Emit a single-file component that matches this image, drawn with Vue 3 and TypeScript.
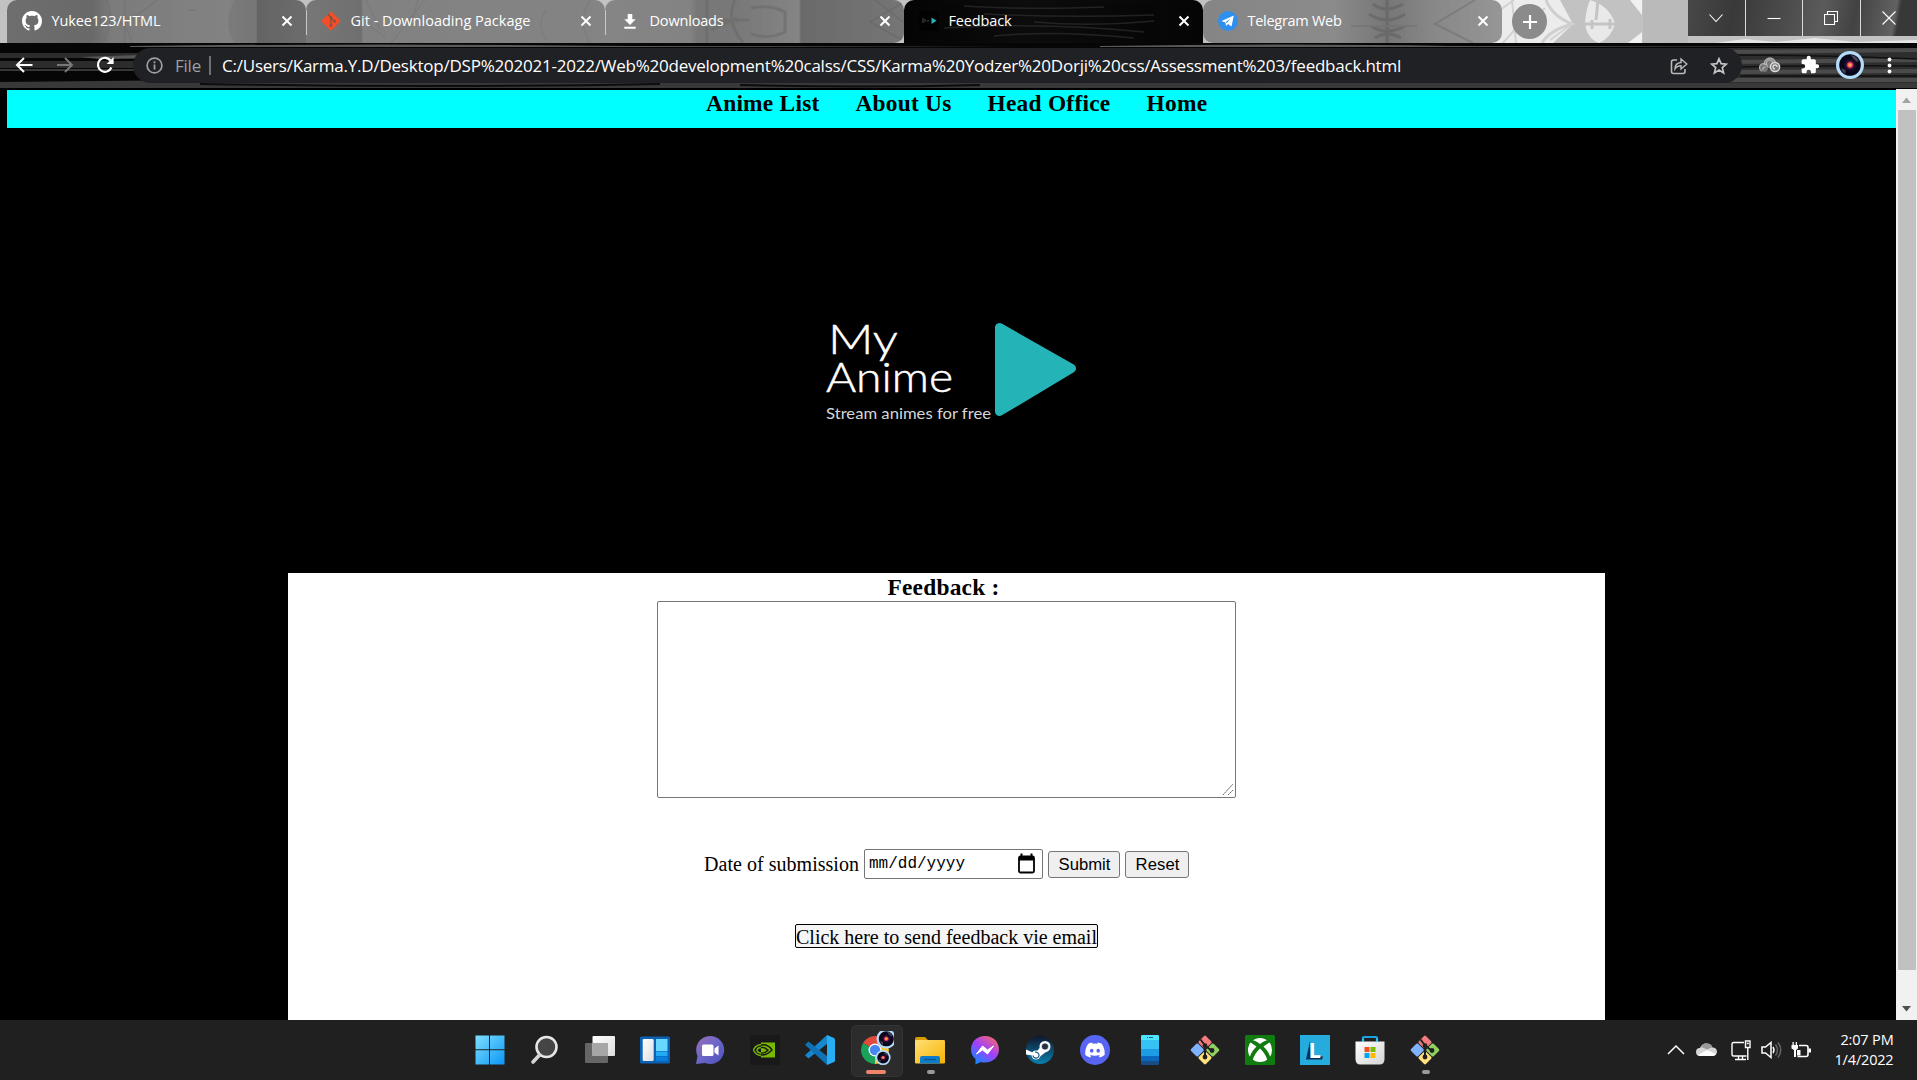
<script setup lang="ts">
interface Tab {
  id: string
  title: string
  width: number
}

const tabs: Tab[] = [
  { id: 'github', title: 'Yukee123/HTML', width: 109 },
  { id: 'git', title: 'Git - Downloading Package', width: 180 },
  { id: 'download', title: 'Downloads', width: 74 },
  { id: 'anime', title: 'Feedback', width: 63 },
  { id: 'telegram', title: 'Telegram Web', width: 94 },
]

const apps: string[] = [
  'windows', 'search', 'taskview', 'widgets', 'chat', 'nvidia', 'vscode', 'chrome', 'explorer',
  'messenger', 'steam', 'discord', 'phone', 'git', 'xbox', 'lenovo', 'store', 'gitrun',
]

const url =
  'C:/Users/Karma.Y.D/Desktop/DSP%202021-2022/Web%20development%20calss/CSS/Karma%20Yodzer%20Dorji%20css/Assessment%203/feedback.html'

// Spreads a label's characters so that it takes up the given width.
const vFit = {
  mounted(el: HTMLElement, binding: { value: number }) {
    const natural = el.getBoundingClientRect().width
    const count = (el.textContent ?? '').length
    if (count > 0) el.style.letterSpacing = `${(binding.value - natural) / count}px`
  },
}
</script>

<template>
  <div class="screen">
    <svg width="0" height="0" class="defs">
      <defs>
        <linearGradient id="win" x1="0" y1="0" x2="1" y2="1"><stop offset="0" stop-color="#7fe0ff" /><stop offset="1" stop-color="#0a95f5" /></linearGradient>
        <linearGradient id="pane" x1="0" y1="0" x2="1" y2="1"><stop offset="0" stop-color="#fff" /><stop offset="1" stop-color="#ddd" /></linearGradient>
        <linearGradient id="chatg" x1="0" y1="0" x2="1" y2="1"><stop offset="0" stop-color="#9a6fb8" /><stop offset=".5" stop-color="#6a66c8" /><stop offset="1" stop-color="#4b50bd" /></linearGradient>
        <linearGradient id="fold" x1="0" y1="0" x2="1" y2="1"><stop offset="0" stop-color="#ffdf76" /><stop offset="1" stop-color="#f6b400" /></linearGradient>
        <linearGradient id="msg" x1=".2" y1="1" x2=".9" y2="0"><stop offset="0" stop-color="#0a8cff" /><stop offset=".5" stop-color="#a040ff" /><stop offset="1" stop-color="#ff6b60" /></linearGradient>
        <linearGradient id="stm" x1="0" y1="0" x2="0" y2="1"><stop offset="0" stop-color="#10172f" /><stop offset="1" stop-color="#0b7fae" /></linearGradient>
        <linearGradient id="str" x1="0" y1="0" x2="1" y2="1"><stop offset="0" stop-color="#fff" /><stop offset="1" stop-color="#d4d4d4" /></linearGradient>
        <radialGradient id="vinyl"><stop offset="0" stop-color="#ffd84a" /><stop offset=".2" stop-color="#ff8a3a" /><stop offset=".38" stop-color="#d8306a" /><stop offset=".55" stop-color="#2a0f34" /><stop offset="1" stop-color="#05061a" /></radialGradient>
        <g id="avatar">
          <circle cx="14" cy="14" r="14" fill="#b5dbfa" />
          <circle cx="14" cy="14" r="10.8" fill="#070719" />
          <path d="M15 4a10 10 0 0 1 8 6l-4 1zM5 17l5 2-1 4a10 10 0 0 1-4-6" fill="#9aa2b4" opacity=".4" />
          <circle cx="14" cy="14" r="7" fill="url(#vinyl)" />
        </g>
        <g id="gitbash">
          <g transform="rotate(45 15 15)">
            <rect x="4.500" y="4.500" width="10" height="10" rx="1.300" fill="#f47b7d" />
            <rect x="15.500" y="4.500" width="10" height="10" rx="1.300" fill="#8fd05f" />
            <rect x="4.500" y="15.500" width="10" height="10" rx="1.300" fill="#80b3ff" />
            <rect x="15.500" y="15.500" width="10" height="10" rx="1.300" fill="#ffe07a" />
          </g>
          <path d="M10.500 4.500l4.500 6v12M15 10.500l6.500 5" fill="none" stroke="#202020" stroke-width="2" />
          <circle cx="15" cy="10.700" r="2.400" fill="#202020" /><circle cx="15" cy="22" r="2.400" fill="#202020" /><circle cx="22" cy="15.500" r="2.400" fill="#202020" />
        </g>
      </defs>
    </svg>

    <header class="tabstrip">
      <svg class="wall" width="1917" height="43" viewBox="0 0 1917 43" preserveAspectRatio="none">
        <rect width="1917" height="43" fill="#c2c2c2" />
        <path d="M1490 0h70l13 24-20 19h-63z" fill="#ececec" />
        <path d="M1503 43l14-16M1500 10l14-10M1545 8l-22 22M1550 40l22-16M1512 0l4 43" fill="none" stroke="#d2d2d2" stroke-width="2" />
        <path d="M1546 0q6 16 26 24-22 6-30 19" fill="none" stroke="#cfcfcf" stroke-width="3" />
        <path d="M1590 0q20 6 25 24-4 14-16 19-12-4-14-20 1-14 5-23z" fill="#e9e9e9" />
        <path d="M1585 24h30M1592 20v9M1610 19v10M1598 0l-2 20" fill="none" stroke="#c4c4c4" stroke-width="3" />
        <path d="M1630 0h12v15zM1642 32v11h-14z" fill="#f1f1f1" />
        <path d="M1643 0h45v43h-45z" fill="#bababa" />
        <path d="M1715 43l30-4 30 3 40-4 40 4 62-2v3z" fill="#e6e6e6" />
      </svg>
      <div v-for="tab in tabs" :key="tab.id" class="tab" :class="'tab-' + tab.id">
        <svg v-if="tab.id === 'github'" class="tex" viewBox="0 0 299 43"><path d="M96 43q12-22 4-43M118 43V0M110 25q20-8 40-25M125 43q-5-20-25-30M180 10h10" fill="none" stroke="#6d6d6d" stroke-width="1.200" /><path d="M228 0q-14 22 0 43h22V0z" fill="#757575" /></svg>
        <svg v-else-if="tab.id === 'git'" class="tex" viewBox="0 0 299 43"><path d="M60 0l14 30M85 43l34-43M56 20l24 18M112 0l-6 20M240 10q-10 14 0 30M284 0q-14 22 0 43" fill="none" stroke="#757575" stroke-width="1.200" /></svg>
        <svg v-else-if="tab.id === 'download'" class="tex" viewBox="0 0 299 43"><path d="M102 0v43M130 0q-10 20 8 43M118 20h26M146 8q18-4 34 4v20q-16 8-34 2M106 30l26-12" fill="none" stroke="#696969" stroke-width="3" /><path d="M299 2l-34 20 34 19M270 0l28 22" fill="none" stroke="#646464" stroke-width="1.500" /></svg>
        <svg v-else-if="tab.id === 'anime'" class="tex" viewBox="0 0 299 43"><path d="M60 6q60 4 140 1M80 14q80 4 170 1M40 28q100-6 200 4M90 36q60-6 140 2M130 22q60 5 120-1" fill="none" stroke="#383838" stroke-width="1.500" /></svg>
        <svg v-else class="tex" viewBox="0 0 299 43"><path d="M184 0v43M170 4q12 10 30 0M166 14q18 12 36 0M168 26q16 10 34 0M172 38q12-8 26 0" fill="none" stroke="#5f5f5f" stroke-width="3" /><path d="M272 0l-40 24 38 19M148 26h66" fill="none" stroke="#707070" stroke-width="2" /></svg>
        <svg v-if="tab.id === 'github'" class="fav" viewBox="0 0 16 16"><path fill="#fff" d="M8 0C3.58 0 0 3.58 0 8c0 3.54 2.29 6.53 5.47 7.59.4.07.55-.17.55-.38 0-.19-.01-.82-.01-1.49-2.01.37-2.53-.49-2.69-.94-.09-.23-.48-.94-.82-1.13-.28-.15-.68-.52-.01-.53.63-.01 1.08.58 1.23.82.72 1.21 1.87.87 2.33.66.07-.52.28-.87.51-1.07-1.78-.2-3.64-.89-3.64-3.95 0-.87.31-1.59.82-2.15-.08-.2-.36-1.02.08-2.12 0 0 .67-.21 2.2.82.64-.18 1.32-.27 2-.27s1.36.09 2 .27c1.53-1.04 2.2-.82 2.2-.82.44 1.1.16 1.92.08 2.12.51.56.82 1.27.82 2.15 0 3.07-1.87 3.75-3.65 3.95.29.25.54.73.54 1.48 0 1.07-.01 1.93-.01 2.2 0 .21.15.46.55.38A8.01 8.01 0 0 0 16 8c0-4.42-3.58-8-8-8z" /></svg>
        <svg v-else-if="tab.id === 'git'" class="fav" viewBox="0 0 20 20"><rect x="3" y="3" width="14" height="14" rx="1.200" fill="#f54d27" transform="rotate(45 10 10)" /><path d="M7 3l3 3.500V15M10 7l3.600 3.400" fill="none" stroke="#7c5348" stroke-width="1.300" /><circle cx="10" cy="6.600" r="1.400" fill="#7c5348" /><circle cx="10" cy="14.600" r="1.400" fill="#7c5348" /><circle cx="13.700" cy="10.400" r="1.400" fill="#7c5348" /></svg>
        <svg v-else-if="tab.id === 'download'" class="fav" viewBox="0 0 20 20"><path d="M7.700 3h4.600v5.200h3.400L10 14 4.300 8.200h3.400zM4.300 15.700h11.400v2H4.300z" fill="#fff" /></svg>
        <svg v-else-if="tab.id === 'anime'" class="fav" viewBox="0 0 20 20"><rect width="20" height="20" fill="#020202" /><path d="M4 7v5M6 8v3M8 10h2" stroke="#4b4b4b" fill="none" /><path d="M12.500 6.500l5 3.200-5 3.300z" fill="#23b5b7" /></svg>
        <svg v-else class="fav" viewBox="0 0 20 20"><circle cx="10" cy="10" r="10" fill="#2f8fee" /><path d="M3.500 10l12.300-5.400-2.300 11-3.500-2.500-2 1.900-.6-3.500z" fill="#fff" /><path d="M7.500 11.300l5-3.700-3.800 4.400z" fill="#2f8fee" /></svg>
        <span class="title"><span v-fit="tab.width">{{ tab.title }}</span></span>
        <svg class="close" width="12" height="12" viewBox="0 0 12 12"><path d="M1.500 1.500l9 9M10.500 1.500l-9 9" stroke="#fff" stroke-width="2" /></svg>
      </div>
      <div class="plus"><svg width="16" height="16" viewBox="0 0 16 16"><path d="M8 1v14M1 8h14" stroke="#fff" stroke-width="2.200" /></svg></div>
      <div class="winctl">
        <div><svg width="14" height="14" viewBox="0 0 14 14"><path d="M.5 3.500l6.500 7 6.500-7" /></svg></div>
        <div><svg width="14" height="14" viewBox="0 0 14 14"><path d="M.5 7.500h13" /></svg></div>
        <div><svg width="14" height="14" viewBox="0 0 14 14"><path d="M.5 3.500h10v10H.5zM3.500 3V.5h10v10H11" /></svg></div>
        <div><svg width="14" height="14" viewBox="0 0 14 14"><path d="M.5.5l13 13M13.500.5l-13 13" /></svg></div>
      </div>
    </header>

    <div class="toolbar">
      <svg class="wall" width="1917" height="46" viewBox="0 0 1917 46" preserveAspectRatio="none">
        <rect width="1917" height="46" fill="#060606" />
        <path d="M0 10h180v5H0zM0 18h160v7H0z" fill="#2c2c2c" />
        <path d="M80 14l60-2 40 3-80 1z" fill="#565656" />
        <path d="M0 26h200v2H0zM0 39l200-2 400 2 672 1v6H0z" fill="#383838" />
        <path d="M130 3q250-3 500 0l400 1H130zM1100 3q200-3 350 0l460 1H1100z" fill="#5a5a5a" />
        <path d="M740 42q120 3 240 0M200 41q240 4 460 0" stroke="#0c0c0c" stroke-width="2" fill="none" />
        <path d="M1720 5h197v41h-197z" fill="#2e2e2e" />
        <path d="M1720 9l197-2M1730 19l187-2M1730 29l187-1M1730 37h187" stroke="#4b4b4b" stroke-width="4" />
        <path d="M1720 12q100 0 197 4M1740 24q90-2 177-1M1740 33h177M1720 42h197" stroke="#111" stroke-width="1.500" fill="none" />
        <path d="M1264 40h653v6h-653z" fill="#393939" />
        <path d="M0 45.500h1917" stroke="#000" />
      </svg>
      <div class="navbtns">
        <svg width="18" height="18" viewBox="0 0 18 18"><path d="M17.500 9H2.500M9 2L2 9l7 7" stroke="#fff" stroke-width="2" fill="none" /></svg>
        <svg width="18" height="18" viewBox="0 0 18 18"><path d="M1 9h14.500M9 2l7 7-7 7" stroke="#777" stroke-width="2" fill="none" /></svg>
        <svg width="18" height="18" viewBox="0 0 18 18"><path d="M15.400 11.500A7 7 0 1 1 14.500 4.500" stroke="#fff" stroke-width="2.200" fill="none" /><path d="M17.600 1v7h-7z" fill="#fff" /></svg>
      </div>
      <div class="omni">
        <svg class="info" width="17" height="17" viewBox="0 0 17 17"><circle cx="8.500" cy="8.500" r="7.400" fill="none" stroke="#9aa0a6" stroke-width="1.700" /><path d="M8.500 7.500v5M8.500 4.300v1.900" stroke="#9aa0a6" stroke-width="1.800" /></svg>
        <span class="file"><span v-fit="26">File</span></span>
        <i class="bar"></i>
        <span class="url"><span v-fit="1179">{{ url }}</span></span>
        <svg class="share" width="18" height="18" viewBox="0 0 18 18"><path d="M7 3H3.500Q1.500 3 1.500 5v9.500q0 2 2 2H13q2 0 2-2V12" fill="none" stroke="#b9babb" stroke-width="1.600" /><path d="M5 12c0-4 2-6.200 6-6.500V2l5.800 5L11 12V8.800c-3 0-4.500.8-6 3.200z" fill="none" stroke="#b9babb" stroke-width="1.400" /></svg>
        <svg class="star" width="18" height="18" viewBox="0 0 18 18"><path d="M9 1.800l2.100 4.900 5.200.4-4 3.500 1.300 5.300L9 13.100l-4.600 2.800 1.300-5.300-4-3.500 5.200-.4z" fill="none" stroke="#c4c5c7" stroke-width="1.700" /></svg>
      </div>
      <div class="ext">
        <svg width="22" height="20" viewBox="0 0 22 20"><circle cx="11" cy="8" r="5.500" fill="#777" /><circle cx="5" cy="13" r="4" fill="#777" /><g fill="none" stroke="#b5b5b5" stroke-width="1.200"><path d="M5.500 10a5.600 5.600 0 1 1 11-2M8 10a3.300 3.300 0 1 1 6-2" /><path d="M2.500 16a4 4 0 1 1 6-4M4 15q-.5-3 2.500-3" /></g><circle cx="16" cy="12" r="4.600" fill="#777" stroke="#ddd" stroke-width="1.500" /><path d="M18 12a2 2 0 1 0-2 2" fill="none" stroke="#ddd" stroke-width="1.300" /></svg>
        <svg width="20" height="20" viewBox="0 0 24 24"><path d="M20.500 11H19V7a2 2 0 0 0-2-2h-4V3.500a2.500 2.500 0 0 0-5 0V5H4a2 2 0 0 0-2 2v3.800h1.500a2.700 2.700 0 0 1 0 5.400H2V20a2 2 0 0 0 2 2h3.800v-1.500a2.700 2.700 0 0 1 5.400 0V22H17a2 2 0 0 0 2-2v-4h1.500a2.500 2.500 0 0 0 0-5z" fill="#fff" /></svg>
        <svg width="28" height="28" viewBox="0 0 28 28"><use href="#avatar" /></svg>
        <svg width="5" height="17" viewBox="0 0 5 17"><circle cx="2.500" cy="2.500" r="1.900" fill="#fff" /><circle cx="2.500" cy="8.500" r="1.900" fill="#fff" /><circle cx="2.500" cy="14.500" r="1.900" fill="#fff" /></svg>
      </div>
    </div>

    <div class="viewport">
      <main class="page">
        <nav class="menu">
          <span v-fit="113.500">Anime List</span>
          <span v-fit="96">About Us</span>
          <span v-fit="123">Head Office</span>
          <span v-fit="61">Home</span>
        </nav>
        <svg class="logo" width="260" height="110" viewBox="820 315 260 110">
          <g class="brand">
            <text x="828" y="354" textLength="70" lengthAdjust="spacingAndGlyphs">My</text>
            <text x="826" y="392" textLength="127" lengthAdjust="spacingAndGlyphs">Anime</text>
          </g>
          <text class="tagline" x="826" y="419" textLength="165" lengthAdjust="spacingAndGlyphs">Stream animes for free</text>
          <path d="M999.500 327.500v84L1071.500 368.500z" fill="#24b4b7" stroke="#24b4b7" stroke-width="9" stroke-linejoin="round" />
        </svg>
        <section class="card">
          <h3><span v-fit="112">Feedback :</span></h3>
          <div class="area">
            <textarea></textarea>
            <svg width="12" height="12" viewBox="0 0 12 12"><path d="M1 12L11 1M6 12l5-5" stroke="#666" fill="none" stroke-dasharray="2 .5" /></svg>
          </div>
          <div class="row">
            <label><span v-fit="155">Date of submission</span></label>
            <div class="date">
              <span v-fit="96">mm/dd/yyyy</span>
              <svg width="17" height="21" viewBox="0 0 17 21"><path d="M3.500.5v3M13.500.5v3" stroke="#000" stroke-width="2" /><rect x="1" y="3.500" width="15" height="16" rx="1.500" fill="none" stroke="#000" stroke-width="1.800" /><path d="M1 3h15v4.500H1z" /></svg>
            </div>
            <button class="submit" type="button"><span v-fit="52">Submit</span></button>
            <button class="reset" type="button"><span v-fit="44">Reset</span></button>
          </div>
          <a class="mail"><span v-fit="301">Click here to send feedback vie email</span></a>
        </section>
      </main>
      <div class="scroll">
        <svg width="9" height="6" viewBox="0 0 9 6"><path d="M0 6l4.500-5.500L9 6z" fill="#a3a3a3" /></svg>
        <div class="thumb"></div>
        <svg width="9" height="6" viewBox="0 0 9 6"><path d="M0 0h9L4.500 5.500z" fill="#505050" /></svg>
      </div>
    </div>

    <footer class="taskbar">
      <div v-for="app in apps" :key="app" class="slot" :class="{ active: app === 'chrome' }">
        <svg width="38" height="38" viewBox="-4 -4 38 38">
          <g v-if="app === 'windows'" fill="url(#win)"><path d="M.5.5H14v13.700H.5zM15 .5h14.500v13.700H15zM.5 15.200H14v14.300H.5zM15 15.200h14.500v14.300H15z" /></g>
          <g v-else-if="app === 'search'"><circle cx="16.500" cy="12" r="10" fill="#454545" stroke="#e7e7e7" stroke-width="2.600" /><path d="M9.500 20L3 27" stroke="#d5d8da" stroke-width="3.600" stroke-linecap="round" /></g>
          <g v-else-if="app === 'taskview'"><rect x="0" y="8" width="23" height="20" rx="1" fill="#666" /><rect x="7.500" y="1" width="22.500" height="20" rx="1" fill="url(#pane)" /><path d="M7.500 8H23v13H7.500z" fill="#a6a6a6" /></g>
          <g v-else-if="app === 'widgets'"><rect y="1.500" width="30" height="27" rx="1.500" fill="#0b62b5" /><rect x="2.700" y="4" width="11" height="22" rx="1.200" fill="url(#pane)" /><path d="M16 4h11.500v12H16z" fill="#69d8ff" /><path d="M16 16.500h11.500v4.500H16z" fill="#22aaf5" /><path d="M16 21.500h11.500V26H16z" fill="#087fdd" /></g>
          <g v-else-if="app === 'chat'"><path d="M15 1a14 14 0 1 1-5 27l-9 1 1.500-8A14 14 0 0 1 15 1z" fill="url(#chatg)" /><rect x="7" y="9.500" width="11.500" height="11.500" rx="1.500" fill="#fff" /><path d="M19.500 13.500l4-3v10l-4-3z" fill="#fff" /></g>
          <g v-else-if="app === 'nvidia'"><rect width="30" height="30" fill="#191919" /><path d="M11 7.500h14v15H11z" fill="#76b900" /><path d="M11 10c5-1 9 2 11 5-3 3-7 5.500-11 5M11 12.500c3-.5 5.500 1 7 2.700-2 2-4.500 3.300-7 2.800" fill="none" stroke="#191919" stroke-width="1.400" /><path d="M11 9.500C7 10 4.500 12.500 3.500 15c1.500 3.500 4 5.300 7.500 5.500M11 12.500c-2.500.2-4 1.500-4 3 .5 1.700 2 2.500 4 2.700" fill="none" stroke="#76b900" stroke-width="1.400" /></g>
          <g v-else-if="app === 'vscode'"><path d="M22.500 8.500L3.500 23.500 0 20.300 22 0z" fill="#1689ce" /><path d="M22.500 21.500L3.500 6.500 0 9.700 22 30z" fill="#0e72b5" /><path d="M22 0l7 3q1 .5 1 1.500v21q0 1-1 1.500l-7 3z" fill="#27aef3" /></g>
          <g v-else-if="app === 'chrome'"><path d="M15 15L2.900 8A14 14 0 0 1 27.100 8z" fill="#e14b3e" /><path d="M15 15L27 8a14 14 0 0 1-12 21z" fill="#fbc62b" /><path d="M15 15v14A14 14 0 0 1 2.900 8z" fill="#1ba25a" /><circle cx="15" cy="15" r="6.500" fill="#fff" /><circle cx="15" cy="15" r="5.200" fill="#4586f3" /><use href="#avatar" transform="translate(16.500 -6) scale(.7)" /><use href="#avatar" transform="translate(15.500 15) scale(.54)" /></g>
          <g v-else-if="app === 'explorer'"><path d="M0 4q0-2 2-2h8l3 3h15v8H0z" fill="#d99a00" /><rect y="5" width="30" height="23.500" rx="1.200" fill="url(#fold)" /><path d="M5 28.500V23q0-2 2-2h16q2 0 2 2v5.500z" fill="#0f7cc9" /><path d="M9 24.500h12" stroke="#075a99" stroke-width="1.500" /></g>
          <g v-else-if="app === 'messenger'"><path d="M15 1C7 1 1 6.800 1 14.500c0 4 1.500 7 4.500 9.500v5.500l5-2.500C21 29.500 29 23 29 14.500 29 6.800 23 1 15 1z" fill="url(#msg)" /><path d="M6.500 19l6-8 5 4 6-4-6 8-5-4z" fill="#fff" stroke="#fff" stroke-linejoin="round" /></g>
          <g v-else-if="app === 'steam'"><circle cx="15" cy="15" r="14" fill="url(#stm)" /><path d="M1 14.500l9 4 5-6 6-1 2 4-8 6-14-2z" fill="#fff" /><circle cx="20" cy="11.500" r="5.500" fill="#fff" /><circle cx="20" cy="11.500" r="3.600" fill="#25304a" stroke="#fff" stroke-width=".8" /><circle cx="11" cy="20" r="4.500" fill="#fff" /><path d="M8 20.500a3 3 0 1 0 2-3.200" fill="none" stroke="#19577e" stroke-width="1.200" /></g>
          <g v-else-if="app === 'discord'"><circle cx="15" cy="15" r="15" fill="#5865f2" /><path transform="translate(5.200 5.300) scale(1.220)" fill="#fff" d="M13.545 2.907a13.200 13.200 0 0 0-3.257-1.011.05.05 0 0 0-.052.025c-.141.25-.297.577-.406.833a12.200 12.200 0 0 0-3.658 0 8 8 0 0 0-.412-.833.05.05 0 0 0-.052-.025c-1.125.194-2.220.534-3.257 1.011a.04.04 0 0 0-.021.018C.356 6.024-.213 9.047.066 12.032q.003.022.021.037a13.300 13.300 0 0 0 3.995 2.020.05.05 0 0 0 .056-.019q.463-.63.818-1.329a.05.05 0 0 0-.01-.059l-.018-.011a9 9 0 0 1-1.248-.595.05.05 0 0 1-.02-.066l.015-.019q.127-.095.248-.195a.05.05 0 0 1 .051-.007c2.619 1.196 5.454 1.196 8.041 0a.05.05 0 0 1 .053.007q.121.1.248.195a.05.05 0 0 1-.004.085 8 8 0 0 1-1.249.594.05.05 0 0 0-.03.03.05.05 0 0 0 .003.041c.24.465.515.909.817 1.329a.05.05 0 0 0 .056.019 13.200 13.200 0 0 0 4.001-2.020.05.05 0 0 0 .021-.037c.334-3.451-.559-6.449-2.366-9.106a.03.03 0 0 0-.02-.019m-8.198 7.307c-.789 0-1.438-.724-1.438-1.612s.637-1.613 1.438-1.613c.807 0 1.450.73 1.438 1.613 0 .888-.637 1.612-1.438 1.612m5.316 0c-.788 0-1.438-.724-1.438-1.612s.637-1.613 1.438-1.613c.807 0 1.451.73 1.438 1.613 0 .888-.631 1.612-1.438 1.612" /></g>
          <g v-else-if="app === 'phone'"><path d="M6 14V1.500Q6 0 7.500 0h15Q24 0 24 1.500V14z" fill="#36c3f4" /><path d="M6 5V1.500Q6 0 7.500 0h15Q24 0 24 1.500V5z" fill="#50e5ff" /><path d="M6 14h18v7H6z" fill="#1c9de3" /><path d="M6 21h18v5H6z" fill="#0b69bd" /><path d="M6 26h18v2.500q0 1.500-1.500 1.500h-15Q6 30 6 28.500z" fill="#174e88" /><path d="M12 2.500h1M14 2.500h4" stroke="#17638a" /></g>
          <use v-else-if="app === 'git' || app === 'gitrun'" href="#gitbash" />
          <g v-else-if="app === 'xbox'"><rect width="30" height="30" rx="1.500" fill="#107c10" /><circle cx="15" cy="15" r="12" fill="#fff" /><path d="M6 5q4 0 9 4 5-4 9-4l1 2-6.500 4.500q6 6 7 12l-3 2q-2-7-7.500-12-5.500 5-7.500 12l-3-2q1-6 7-12L5 7z" fill="#107c10" /></g>
          <g v-else-if="app === 'lenovo'"><rect width="30" height="30" fill="#25abdc" /><path d="M10 6L6 24.500h16l1-3H11z" fill="#0c2e5c" /><text class="ell" x="8.500" y="22.500">L</text></g>
          <g v-else><path d="M8 9V2.800Q8 2 9 2h12q1 0 1 .8V9" fill="none" stroke="#1ba0e2" stroke-width="2.200" /><path d="M.5 6.500h29V24q0 5.500-5 5.500h-19q-5 0-5-5.500z" fill="url(#str)" /><path d="M8 6.500v-3M22 6.500v-3" stroke="#35c2f5" stroke-width="2" /><path d="M9.500 12h5v5h-5z" fill="#f25022" /><path d="M15.500 12h5v5h-5z" fill="#7fba00" /><path d="M9.500 18h5v5h-5z" fill="#00a4ef" /><path d="M15.500 18h5v5h-5z" fill="#ffb900" /></g>
        </svg>
        <i v-if="app === 'chrome'" class="mark long"></i>
        <i v-if="app === 'explorer' || app === 'gitrun'" class="mark"></i>
      </div>
      <div class="tray">
        <svg width="18" height="12" viewBox="0 0 18 12"><path d="M1 10l8-8 8 8" stroke="#fff" stroke-width="1.500" fill="none" /></svg>
        <svg class="cloud" width="21" height="14" viewBox="0 0 21 14"><path d="M4 13a4 4 0 0 1 0-8q2-5 7-4.500 4 .2 5.500 4A4.200 4.200 0 0 1 17 13z" fill="#d6d6d6" /><path d="M5 4q2-4 6-3.600 4.500.4 5.500 4.200-3 .2-5 2z" fill="#999" /><path d="M2 12l9-5 9 4q-1 2-3 2H4z" fill="#fff" /></svg>
        <svg class="net" width="20" height="21" viewBox="0 0 20 21"><path d="M13 2.500H2.500q-1.500 0-1.500 1.500v10.500q0 1.500 1.500 1.500h13M4 19.500h11M7.500 16v3M11.500 16v3" stroke="#fff" stroke-width="1.400" fill="none" /><path d="M14.500 1h4.500v6.500h-4.500zM16.800 8v12M15.800 3.500h2" stroke="#fff" stroke-width="1.400" fill="none" /></svg>
        <svg class="vol" width="21" height="18" viewBox="0 0 21 18"><path d="M1 6h3.500L10 1.500v15L4.500 12H1z" stroke="#fff" stroke-width="1.500" fill="none" /><path d="M12 6q2 3 0 6" stroke="#fff" stroke-width="1.400" fill="none" /><path d="M14.500 3.500q4 5.500 0 11M17 1.500q5.500 7.500 0 15" stroke="#666" stroke-width="1.400" fill="none" /></svg>
        <svg class="bat" width="21" height="17" viewBox="0 0 21 17"><path d="M8 3.500h7q2 0 2 2v7q0 2-2 2H6.500" stroke="#fff" stroke-width="1.600" fill="none" /><path d="M17.500 6.500H20v4h-2.500zM6 8h3.500v5.500H6zM.5 3h6.500v3.500L5 8v7H3V8L.5 6.500zM1.500 0h1.300v3H1.500zM4.700 0H6v3H4.700z" fill="#fff" /></svg>
        <div class="clock"><div><span v-fit="53">2:07 PM</span></div><div><span v-fit="59">1/4/2022</span></div></div>
      </div>
    </footer>
  </div>
</template>

<style>
body { margin: 0; background: #000; overflow: hidden; }
</style>

<style scoped>
.screen { width: 1917px; height: 1080px; display: flex; flex-direction: column; overflow: hidden; background: #000; font-family: "Open Sans", "Noto Sans", sans-serif; }
.screen * { box-sizing: border-box; }
.screen span { white-space: nowrap; }
.defs { position: absolute; }
.wall { position: absolute; left: 0; top: 0; z-index: 0; }

.tabstrip { position: relative; height: 43px; flex: none; display: flex; padding-left: 7px; }
.tab { position: relative; z-index: 1; width: 299px; height: 43px; display: flex; align-items: center; padding: 0 13px 1px 15px; border-radius: 10px 10px 0 0; color: #fff; font-size: 14.5px; overflow: hidden; }
.tab-github { background: linear-gradient(90deg, #6e6e6e 0, #696969 85px, #7c7c7c 105px, #838383 220px, #797979 249px, #646464 250px, #6c6c6c 299px); }
.tab-git { background: linear-gradient(90deg, #777 0, #6f6f6f 55px, #828282 57px, #848484 100%); }
.tab-download { background: linear-gradient(90deg, #858585 0, #838383 85px, #777 92px, #7a7a7a 140px, #858585 194px, #6b6b6b 196px, #767676 100%); border-bottom-right-radius: 10px; }
.tab-telegram { background: linear-gradient(90deg, #858585 0, #8b8b8b 130px, #777 185px, #888 230px, #969696 100%); border-radius: 10px; }
.tab-anime { background: linear-gradient(90deg, #040404, #0d0d0d 40%, #050505); }
.tab-git::before, .tab-download::before { content: ""; position: absolute; left: 0; top: 10px; width: 1px; height: 25px; background: #c8c8c8; }
.tex { position: absolute; left: 0; top: 0; width: 299px; height: 43px; opacity: .55; }
.fav { position: relative; width: 20px; height: 20px; flex: none; }
.title { position: relative; margin-left: 9.5px; flex: 1; line-height: 20px; }
.close { position: relative; flex: none; }
.plus { position: relative; z-index: 1; width: 35px; height: 35px; margin: 4px 0 0 10px; border-radius: 50%; background: #8b8b8b; display: grid; place-items: center; }
.winctl { position: relative; z-index: 1; margin-left: auto; width: 229px; height: 36px; display: flex; background: linear-gradient(100deg, #484848, #393939 20%, #4b4b4b 42%, #5b5b5b 58%, #424242 72%, #626262 89%, #383838 91%); }
.winctl div { flex: 1; display: grid; place-items: center; border-left: 1px solid #dadada; }
.winctl div:first-child { border-left: 0; }
.winctl path { fill: none; stroke: #fff; stroke-width: 1.1; }

.toolbar { position: relative; height: 46px; flex: none; display: flex; align-items: flex-start; }
.navbtns { position: relative; z-index: 1; width: 133px; padding: 13px 0 0 15px; display: flex; gap: 22.5px; }
.omni { position: relative; z-index: 1; margin-top: 5px; width: 1609px; height: 35px; border-radius: 18px; background: #202124; color: #fff; display: flex; align-items: center; padding: 0 14px 0 13px; font-size: 17px; }
.info { flex: none; }
.file { width: 26px; margin-left: 12px; color: #9aa0a6; }
.bar { width: 2px; height: 19px; margin: 0 11px 0 8px; background: #6d7074; }
.url { flex: 1; }
.share { margin-right: 22px; flex: none; }
.star { flex: none; }
.ext { position: relative; z-index: 1; height: 44px; display: flex; align-items: center; padding-left: 17px; }
.ext svg:nth-child(2) { margin-left: 19px; }
.ext svg:nth-child(3) { margin-left: 16px; }
.ext svg:nth-child(4) { margin-left: 23px; }

.viewport { height: 931px; flex: none; display: flex; background: #000; }
.page { width: 1896px; overflow: hidden; padding: 1px 0 0 7px; display: flex; flex-direction: column; font-family: "Liberation Serif", serif; }
.menu { height: 38px; flex: none; background: #0ff; color: #000; font-size: 23.4px; font-weight: 700; line-height: 26px; display: flex; gap: 36px; padding-left: 699px; }
.logo { margin: 187px 0 148px 813px; flex: none; }
.brand { font-family: "Lato", sans-serif; font-weight: 300; font-size: 41px; fill: #fff; stroke: #fff; stroke-width: .5px; }
.tagline { font-family: "Lato", sans-serif; font-size: 15px; fill: #d6d6d6; }
.card { margin-left: 281px; width: 1317px; height: 450px; flex: none; background: #fff; color: #000; display: flex; flex-direction: column; align-items: center; font-size: 20px; }
.card h3 { margin: 0 6px 0 0; height: 28px; font-size: 23.4px; line-height: 29px; }
.area { position: relative; width: 579px; height: 197px; }
.area textarea { display: block; width: 100%; height: 100%; resize: none; border: 1px solid #767676; border-radius: 2px; background: #fff; }
.area svg { position: absolute; right: 2px; bottom: 3px; }
.row { margin-top: 51px; height: 30px; display: flex; align-items: center; }
.row label { width: 155px; }
.date { width: 179px; height: 30px; margin: 0 5px 0 5px; border: 1px solid #767676; border-radius: 2px; display: flex; align-items: center; justify-content: space-between; padding: 0 7px 0 4px; font: 16px "Liberation Mono", monospace; }
.date svg { margin-bottom: 1px; }
.row button { height: 27px; border: 1px solid #767676; border-radius: 3px; background: #efefef; padding: 1px 0 0 1px; color: #000; font: 16.67px "Liberation Sans", sans-serif; }
.submit { width: 72px; }
.row .reset { width: 64px; margin-left: 5px; }
.mail { margin-top: 45px; width: 303px; height: 24px; border: 1px solid #000; border-radius: 2px; background: #f5f5f5; line-height: 24px; }
.scroll { width: 21px; background: #f1f1f1; display: flex; flex-direction: column; align-items: center; padding: 8px 0 8px; }
.thumb { width: 18px; height: 860px; margin: 7px 0 auto; background: #c1c1c1; }

.taskbar { height: 60px; flex: none; background: #202020; display: flex; padding-left: 462.5px; }
.slot { position: relative; width: 55px; height: 60px; flex: none; display: grid; place-items: center; }
.active::before { content: ""; position: absolute; left: 3px; top: 5px; width: 50px; height: 50px; border-radius: 5px; background: #2c2c2c; border: 1px solid #343434; }
.slot svg { position: relative; }
.mark { position: absolute; left: 24px; top: 50px; width: 8px; height: 4px; border-radius: 2px; background: #999; }
.long { left: 18px; top: 50px; width: 20px; background: #f2846b; }
.ell { font: 700 22px "Open Sans", sans-serif; fill: #fff; }
.tray { width: 250px; margin-left: auto; display: flex; align-items: center; color: #fff; }
.tray svg { flex: none; }
.cloud { margin-left: 11px; }
.net { margin-left: 14px; }
.vol { margin-left: 10px; }
.bat { margin-left: 9px; }
.clock { margin: 0 23.5px 0 auto; font-size: 14.5px; line-height: 20px; text-align: right; }
</style>
